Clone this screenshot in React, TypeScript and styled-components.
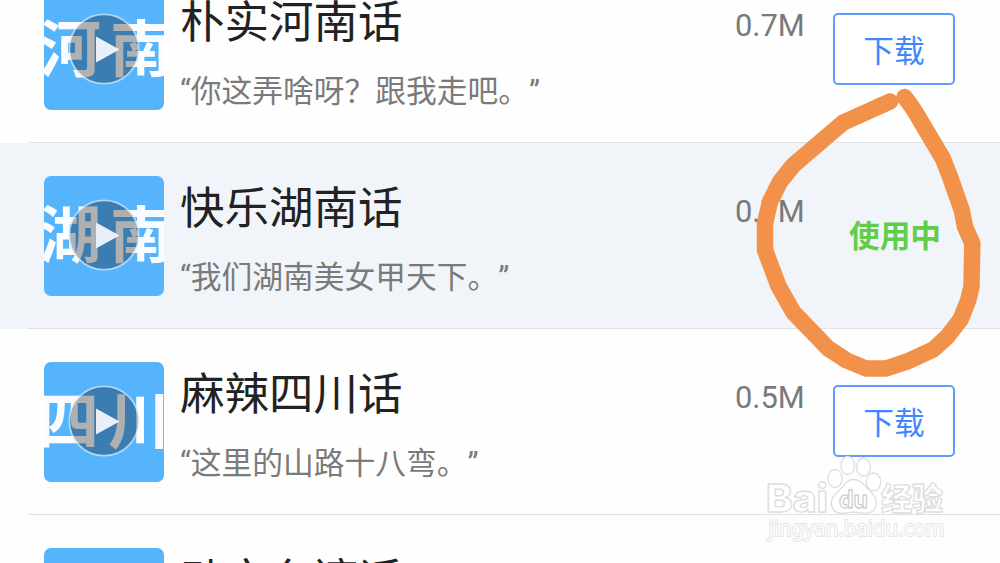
import React from "react";
import styled, { createGlobalStyle } from "styled-components";

const GlobalStyle = createGlobalStyle`
  body {
    margin: 0;
    background: #fefefe;
    overflow: hidden;
    font-family: Roboto, "Noto Sans CJK SC", sans-serif;
    text-spacing-trim: space-all;
  }
`;

const Screen = styled.main`
  position: relative;
  width: 1000px;
  height: 563px;
  overflow: hidden;
`;

const List = styled.ul`
  list-style: none;
  margin: -43px 0 0;
  padding: 0;
`;

const Row = styled.li<{ $active?: boolean }>`
  box-sizing: border-box;
  height: 186px;
  display: flex;
  flex-direction: column;
  background: ${(p) => (p.$active ? "#f1f5f9" : "transparent")};
`;

const RowBody = styled.div`
  flex: 1;
  display: flex;
  align-items: flex-start;
  padding: 33px 45px 0 44px;
`;

const Divider = styled.div`
  height: 1px;
  margin-left: 28px;
  background: #dfe1e3;
`;

const Cover = styled.div`
  position: relative;
  flex: none;
  width: 120px;
  height: 119.5px;
  border-radius: 7px;
  background: #55b4fc;
  overflow: hidden;
`;

const CoverText = styled.div<{ $shift: number }>`
  margin: 24px 0 0 ${(p) => p.$shift}px;
  width: 220px;
  font: 700 62px/63px "Noto Sans CJK SC", sans-serif;
  letter-spacing: 9px;
  color: #fafcff;
  white-space: nowrap;
`;

const PlayIcon = styled.svg`
  position: absolute;
  left: 23.5px;
  top: 23px;
  width: 72px;
  height: 72px;
`;

const Texts = styled.div`
  flex: 1;
  margin-left: 16px;
  white-space: nowrap;
`;

const Title = styled.div`
  margin-top: 1px;
  font-size: 44.5px;
  line-height: 64px;
  color: #222;
`;

const Quote = styled.div`
  margin-top: 14px;
  font-size: 30.75px;
  line-height: 46px;
  color: #7a7a7a;
`;

const Size = styled.div`
  width: 98px;
  margin-top: 18px;
  font-size: 30.9px;
  line-height: 36px;
  color: #7a7a7a;
`;

const Action = styled.div`
  width: 122px;
  margin-top: 23px;
`;

const DownloadButton = styled.button`
  box-sizing: border-box;
  display: block;
  width: 122px;
  height: 72px;
  padding: 0;
  border: 2px solid #629bff;
  border-radius: 5px;
  background: #fff;
  color: #3f87ff;
  font: 400 30.7px/68px "Noto Sans CJK SC", sans-serif;
`;

const InUse = styled.div`
  padding: 2px 0 0 2px;
  text-align: center;
  line-height: 72px;
  font-size: 30.7px;
  font-weight: 700;
  color: #62cd4b;
`;

const Overlay = styled.svg`
  position: absolute;
  inset: 0;
  pointer-events: none;
`;

type Voice = {
  cover: string;
  shift: number;
  title: string;
  quote: string;
  size: string;
  inUse?: boolean;
};

const voices: Voice[] = [
  { cover: "河南", shift: -5, title: "朴实河南话", quote: "“你这弄啥呀？跟我走吧。”", size: "0.7M" },
  { cover: "湖南", shift: -5, title: "快乐湖南话", quote: "“我们湖南美女甲天下。”", size: "0.7M", inUse: true },
  { cover: "四川", shift: -7, title: "麻辣四川话", quote: "“这里的山路十八弯。”", size: "0.5M" },
  { cover: "", shift: 0, title: "动文台湾话", quote: "", size: "" },
];

const Play = () => (
  <PlayIcon viewBox="0 0 72 72">
    <circle cx="36" cy="36" r="34.5" fill="#000" fillOpacity=".3" />
    <circle cx="36" cy="36" r="34.7" fill="none" stroke="#dcebf7" strokeOpacity=".7" strokeWidth="1.8" />
    <path d="M28 23.5L51.500 36.5L28 49.5Z" fill="#eaf0f9" />
  </PlayIcon>
);

const Annotation = () => (
  <Overlay width="1000" height="563" viewBox="0 0 1000 563">
    <path
      d="M890 101.5L843.3 122.5L793.5 165L780 181.7L770 201.7L765 223.3V250L778.3 285.7L793.5 312.5L828.3 348.5L846.7 360.5L866 368.5H886L906.7 361.7L933.3 349.5L947.3 336.7L960.7 319.3L968.3 300L971.5 286.7L972.3 243.3L965 226.7L961.7 210L950 176.7L942.7 158.3L920 120Q912 106 904.5 97"
      fill="none"
      stroke="#f2914a"
      strokeWidth="16.5"
      strokeLinecap="round"
      strokeLinejoin="round"
    />
  </Overlay>
);

const Watermark = () => (
  <Overlay width="1000" height="563" viewBox="0 0 1000 563">
    <g fill="#fff" stroke="#dedede" strokeWidth="1.3" strokeLinejoin="round">
      <text x="766" y="511.5" fontSize="38" fontFamily="Inter, sans-serif" fontWeight="800" textLength="62" lengthAdjust="spacingAndGlyphs">Bai</text>
      <ellipse cx="835" cy="478.5" rx="7.2" ry="9" />
      <ellipse cx="847.7" cy="465.5" rx="6.8" ry="9" />
      <ellipse cx="863.5" cy="467" rx="7" ry="9" />
      <ellipse cx="873.5" cy="482" rx="7.2" ry="9" />
      <path d="M853.5 479.5C846 479.5 843.5 487 837.500 492C833 496 830 501 832 506.500C834 513 840 514 846 512.800C851 512 856 512 861 512.800C868 514 874 512 876 506C877.500 500 875 496.500 870.500 491.500C864 485 861.500 479.500 853.500 479.500Z" />
      <text x="839" y="508" fontSize="24" fontFamily="Inter, sans-serif" fontWeight="700" stroke="#cfcfcf" textLength="29" lengthAdjust="spacingAndGlyphs">du</text>
      <text x="881" y="509.500" fontSize="31" fontFamily="Noto Sans CJK SC, sans-serif" fontWeight="900">经验</text>
    </g>
    <text
      x="768.500"
      y="535.500"
      fontSize="22.5"
      fontFamily="Noto Sans, sans-serif"
      textLength="176"
      lengthAdjust="spacingAndGlyphs"
      fill="#fbfbfb"
      stroke="#e4e4e4"
      strokeWidth="1.8"
      paintOrder="stroke"
    >
      jingyan.baidu.com
    </text>
  </Overlay>
);

export default function App() {
  return (
    <Screen>
      <GlobalStyle />
      <List>
        {voices.map((v) => (
          <Row key={v.title} $active={v.inUse}>
            <RowBody>
              <Cover>
                <CoverText $shift={v.shift}>{v.cover}</CoverText>
                <Play />
              </Cover>
              <Texts>
                <Title>{v.title}</Title>
                <Quote>{v.quote}</Quote>
              </Texts>
              <Size>{v.size}</Size>
              <Action>
                {v.inUse ? <InUse>使用中</InUse> : <DownloadButton>下载</DownloadButton>}
              </Action>
            </RowBody>
            <Divider />
          </Row>
        ))}
      </List>
      <Annotation />
      <Watermark />
    </Screen>
  );
}
